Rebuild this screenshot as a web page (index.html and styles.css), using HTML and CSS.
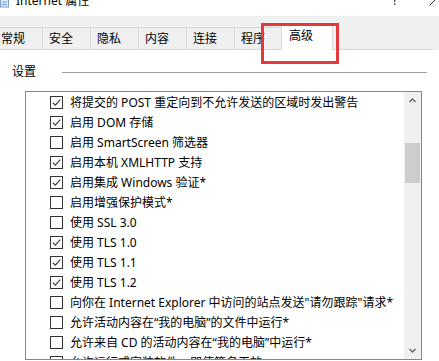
FILE: index.html
```html
<!DOCTYPE html>
<html lang="zh-CN">
<head>
<meta charset="utf-8">
<title>Internet 属性</title>
<link rel="stylesheet" href="styles.css">
</head>
<body>
<div class="window">
  <div class="titlebar">
    <svg class="appicon" width="10" height="8" viewBox="0 0 10 8">
      <rect x="0.5" y="-3" width="8" height="10" fill="#dde8f4" stroke="#7d9dc4"/>
      <line x1="2" y1="2" x2="7" y2="2" stroke="#7d9dc4"/>
      <line x1="2" y1="4.5" x2="7" y2="4.5" stroke="#7d9dc4"/>
    </svg>
    <span class="title">Internet 属性</span>
    <span class="spacer"></span>
    <svg class="help" width="10" height="6" viewBox="0 0 10 6">
      <rect x="4" y="0" width="1.4" height="1.6" fill="#333"/>
      <rect x="4" y="3.4" width="1.4" height="1.6" fill="#333"/>
    </svg>
    <svg class="close" width="11" height="6" viewBox="0 0 11 6">
      <line x1="1.5" y1="5.5" x2="7.5" y2="-0.5" stroke="#333" stroke-width="1"/>
    </svg>
  </div>

  <div class="tabarea">
    <div class="tabs">
      <div class="tab">常规</div>
      <div class="tab">安全</div>
      <div class="tab">隐私</div>
      <div class="tab">内容</div>
      <div class="tab">连接</div>
      <div class="tab">程序</div>
      <div class="tab selected">高级</div>
      <div class="tab-fill"></div>
    </div>
  </div>

  <div class="page">
    <div class="group-head">
      <span class="group-label">设置</span>
      <span class="rule"></span>
    </div>
    <div class="listbox">
      <div class="rows">
        <div class="row"><span class="cb on"><svg viewBox="0 0 11 11"><polyline points="1.8,5.6 4.3,8.1 9.3,2.6"/></svg></span><span>将提交的 POST 重定向到不允许发送的区域时发出警告</span></div>
        <div class="row"><span class="cb on"><svg viewBox="0 0 11 11"><polyline points="1.8,5.6 4.3,8.1 9.3,2.6"/></svg></span><span>启用 DOM 存储</span></div>
        <div class="row"><span class="cb"></span><span>启用 SmartScreen 筛选器</span></div>
        <div class="row"><span class="cb on"><svg viewBox="0 0 11 11"><polyline points="1.8,5.6 4.3,8.1 9.3,2.6"/></svg></span><span>启用本机 XMLHTTP 支持</span></div>
        <div class="row"><span class="cb on"><svg viewBox="0 0 11 11"><polyline points="1.8,5.6 4.3,8.1 9.3,2.6"/></svg></span><span>启用集成 Windows 验证*</span></div>
        <div class="row"><span class="cb"></span><span>启用增强保护模式*</span></div>
        <div class="row"><span class="cb"></span><span>使用 SSL 3.0</span></div>
        <div class="row"><span class="cb on"><svg viewBox="0 0 11 11"><polyline points="1.8,5.6 4.3,8.1 9.3,2.6"/></svg></span><span>使用 TLS 1.0</span></div>
        <div class="row"><span class="cb on"><svg viewBox="0 0 11 11"><polyline points="1.8,5.6 4.3,8.1 9.3,2.6"/></svg></span><span>使用 TLS 1.1</span></div>
        <div class="row"><span class="cb on"><svg viewBox="0 0 11 11"><polyline points="1.8,5.6 4.3,8.1 9.3,2.6"/></svg></span><span>使用 TLS 1.2</span></div>
        <div class="row"><span class="cb"></span><span>向你在 Internet Explorer 中访问的站点发送"请勿跟踪"请求*</span></div>
        <div class="row"><span class="cb"></span><span>允许活动内容在“我的电脑”的文件中运行*</span></div>
        <div class="row"><span class="cb"></span><span>允许来自 CD 的活动内容在“我的电脑”中运行*</span></div>
        <div class="row"><span class="cb"></span><span>允许运行或安装软件，即使签名无效</span></div>
      </div>
      <div class="vscroll">
        <div class="sb-btn">
          <svg width="7" height="5" viewBox="0 0 7 5"><polyline points="0.5,4 3.5,1 6.5,4"/></svg>
        </div>
        <div class="sb-thumb"></div>
        <div class="sb-space"></div>
        <div class="sb-btn">
          <svg width="7" height="5" viewBox="0 0 7 5"><polyline points="0.5,1 3.5,4 6.5,1"/></svg>
        </div>
      </div>
    </div>
  </div>

  <div class="annotation"></div>
</div>
</body>
</html>
```

FILE: styles.css
```css
html, body {
  margin: 0;
  padding: 0;
  background: #ffffff;
}

body {
  font-family: "Noto Sans", "Noto Sans CJK SC", sans-serif;
  font-size: 12px;
  color: #000000;
}

.window {
  position: relative;
  width: 439px;
  height: 361px;
  overflow: hidden;
  background: #ffffff;
}

/* Title bar (top cut off) */
.titlebar {
  height: 16px;
  display: flex;
  align-items: flex-start;
  overflow: hidden;
  background: #ffffff;
}

.appicon {
  display: block;
  flex-shrink: 0;
}

.title {
  margin-left: 6px;
  margin-top: -7px;
  line-height: 16px;
  font-size: 12px;
  white-space: nowrap;
}

.spacer {
  flex: 1;
}

.help {
  display: block;
  margin-right: 28px;
}

.close {
  display: block;
  margin-right: 0;
}

/* Tabs */
.tabarea {
  height: 34px;
  background: #f0f0f0;
  display: flex;
  align-items: flex-end;
}

.tabs {
  display: flex;
  align-items: flex-end;
  width: 100%;
  margin-left: -6px;
}

.tab {
  box-sizing: border-box;
  width: 48px;
  height: 23px;
  flex-shrink: 0;
  border-left: 1px solid #d9d9d9;
  border-top: 1px solid #d9d9d9;
  border-bottom: 1px solid #d9d9d9;
  padding-left: 6px;
  line-height: 21px;
  background: #f0f0f0;
  white-space: nowrap;
}

.tab.selected {
  width: 52px;
  height: 26px;
  margin-left: -1px;
  border: 1px solid #d9d9d9;
  border-bottom: none;
  background: #ffffff;
  padding-left: 7px;
  line-height: 22px;
}

.tab-fill {
  flex: 1;
  height: 23px;
  box-sizing: border-box;
  border-bottom: 1px solid #d9d9d9;
}

/* Page */
.page {
  background: #ffffff;
}

.group-head {
  box-sizing: border-box;
  height: 41px;
  padding: 3px 12px 0 12px;
  display: flex;
  align-items: center;
}

.group-label {
  line-height: 16px;
  white-space: nowrap;
}

.rule {
  flex: 1;
  height: 1px;
  margin-left: 26px;
  background: #a0a0a0;
}

.listbox {
  box-sizing: border-box;
  margin-left: 25px;
  width: 397px;
  height: 269px;
  border: 1px solid #828790;
  display: flex;
  background: #ffffff;
}

.rows {
  flex: 1;
  overflow: hidden;
  padding-left: 24px;
}

.row {
  height: 20px;
  display: flex;
  align-items: center;
  white-space: nowrap;
}

.cb {
  box-sizing: border-box;
  width: 13px;
  height: 13px;
  border: 1px solid #333333;
  background: #ffffff;
  margin-right: 7px;
  flex-shrink: 0;
  display: block;
}

.cb svg {
  display: block;
  width: 11px;
  height: 11px;
}

.cb polyline {
  fill: none;
  stroke: #333333;
  stroke-width: 1.1;
}

.vscroll {
  width: 17px;
  flex-shrink: 0;
  background: #f0f0f0;
  display: flex;
  flex-direction: column;
}

.sb-btn {
  height: 17px;
  display: flex;
  align-items: center;
  justify-content: center;
  flex-shrink: 0;
}

.sb-btn polyline {
  fill: none;
  stroke: #606060;
  stroke-width: 1.3;
}

.sb-thumb {
  margin: 34px 1px 0 1px;
  height: 40px;
  background: #cdcdcd;
  flex-shrink: 0;
}

.sb-space {
  flex: 1;
}

/* Red highlight annotation over the selected tab */
.annotation {
  position: absolute;
  left: 261px;
  top: 23px;
  width: 78px;
  height: 41px;
  box-sizing: border-box;
  border: 3px solid #e4393c;
}
```
